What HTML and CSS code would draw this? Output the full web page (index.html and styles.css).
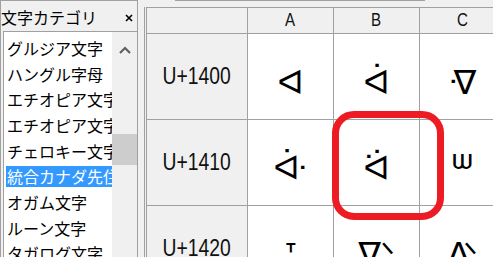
FILE: index.html
```html
<!DOCTYPE html>
<html lang="ja">
<head>
  <meta charset="UTF-8" />
  <title>文字コード表</title>
  <link rel="stylesheet" href="styles.css">
</head>
<body>
  <div class="window">
    <aside class="panel">
      <div class="panel-head">
        <span class="panel-title">文字カテゴリ</span>
        <svg class="close" width="8" height="8" viewBox="0 0 8 8">
          <path d="M1 1 L7 7 M7 1 L1 7" stroke="#000" stroke-width="1.6" fill="none"/>
        </svg>
      </div>
      <div class="listbox">
        <ul class="items">
          <li class="item">グルジア文字</li>
          <li class="item">ハングル字母</li>
          <li class="item">エチオピア文字</li>
          <li class="item">エチオピア文字</li>
          <li class="item">チェロキー文字</li>
          <li class="item selected">統合カナダ先住民音節文字</li>
          <li class="item">オガム文字</li>
          <li class="item">ルーン文字</li>
          <li class="item">タガログ文字</li>
        </ul>
        <div class="scrollbar">
          <div class="arrow">
            <svg width="12" height="8" viewBox="0 0 12 8">
              <path d="M1 7 L6 2 L11 7" stroke="#606060" stroke-width="2.2" fill="none"/>
            </svg>
          </div>
          <div class="thumb"></div>
        </div>
      </div>
    </aside>
    <div class="splitter"></div>
    <main class="chart">
      <div class="topline"></div>
      <div class="grid-wrap">
        <div class="grid">
          <div class="head corner"></div>
          <div class="head"><span class="narrow">A</span></div>
          <div class="head"><span class="narrow">B</span></div>
          <div class="head"><span class="narrow">C</span></div>

          <div class="row-head"><span class="narrow">U+1400</span></div>
          <div class="cell">&#x140A;</div>
          <div class="cell">&#x140B;</div>
          <div class="cell">&#x140C;</div>

          <div class="row-head"><span class="narrow">U+1410</span></div>
          <div class="cell">&#x141A;</div>
          <div class="cell">&#x141B;</div>
          <div class="cell small-glyph">&#x141C;</div>

          <div class="row-head"><span class="narrow">U+1420</span></div>
          <div class="cell">&#x142A;</div>
          <div class="cell">&#x142B;</div>
          <div class="cell">&#x142C;</div>
        </div>
      </div>
    </main>
    <div class="mark"></div>
  </div>
</body>
</html>
```

FILE: styles.css
```css
body {
  margin: 0;
  width: 493px;
  height: 257px;
  overflow: hidden;
  background-color: #f0f0f0;
  font-family: "Noto Sans CJK JP", sans-serif;
}
.window {
  position: relative;
  display: flex;
  height: 257px;
}
.panel {
  width: 138px;
  flex: none;
  box-sizing: border-box;
  border-top: 1px solid #a0a0a0;
  border-left: 1px solid #a0a0a0;
  border-right: 1px solid #a0a0a0;
  display: flex;
  flex-direction: column;
}
.panel-head {
  height: 30px;
  box-sizing: border-box;
  padding: 2px 4px 0 0;
  display: flex;
  align-items: center;
  justify-content: space-between;
}
.panel-title {
  font-size: 16px;
  color: #000;
}
.close {
  margin-top: 2px;
}
.listbox {
  flex: 1;
  min-height: 0;
  display: flex;
  margin-left: 2px;
  border-top: 1px solid #a0a0a0;
  border-left: 1px solid #a0a0a0;
  background-color: #fff;
}
.items {
  flex: 1;
  min-width: 0;
  list-style: none;
  margin: 0;
  padding: 3px 0 0 2px;
  overflow: hidden;
}
.item {
  height: 25.7px;
  display: flex;
  align-items: center;
  padding-left: 1px;
  white-space: nowrap;
  font-size: 16px;
  color: #000;
}
.item.selected {
  height: 21px;
  margin: 2.35px 0;
  background-color: #3399ff;
  color: #fff;
}
.scrollbar {
  width: 25px;
  flex: none;
  background-color: #f0f0f0;
}
.arrow {
  height: 36px;
  display: flex;
  align-items: center;
  justify-content: center;
}
.thumb {
  margin-top: 66px;
  height: 31px;
  background-color: #cdcdcd;
}
.splitter {
  width: 6px;
  flex: none;
}
.chart {
  flex: 1;
  min-width: 0;
  overflow: hidden;
}
.topline {
  margin-left: 31px;
  width: 250px;
  height: 1px;
  background-color: #a0a0a0;
}
.grid-wrap {
  margin-top: 6px;
  height: 250px;
  border-left: 1px solid #a0a0a0;
  padding-left: 1px;
}
.grid {
  display: grid;
  grid-template-columns: 100px 85px 85px 85px;
  grid-template-rows: 25px 85px 85px 85px;
  gap: 1px;
  padding: 1px 0 0 1px;
  width: max-content;
  background-color: #a0a0a0;
}
.head, .row-head {
  background-color: #f0f0f0;
  display: flex;
  align-items: center;
  justify-content: center;
  font-family: "Liberation Sans", Arial, sans-serif;
  color: #111;
}
.narrow {
  display: inline-block;
  transform: scaleX(0.84);
}
.head {
  font-size: 18px;
}
.row-head {
  font-size: 23px;
}
.cell {
  background-color: #fff;
  display: flex;
  align-items: center;
  justify-content: center;
  box-sizing: border-box;
  padding-top: 10px;
  font-family: "DejaVu Sans", sans-serif;
  font-size: 34px;
  color: #000;
}
.cell.small-glyph {
  padding-top: 22px;
  font-size: 46px;
}
.mark {
  position: absolute;
  left: 332px;
  top: 111px;
  width: 112px;
  height: 109px;
  box-sizing: border-box;
  border: 7px solid #ed1c24;
  border-radius: 22px;
}
```
